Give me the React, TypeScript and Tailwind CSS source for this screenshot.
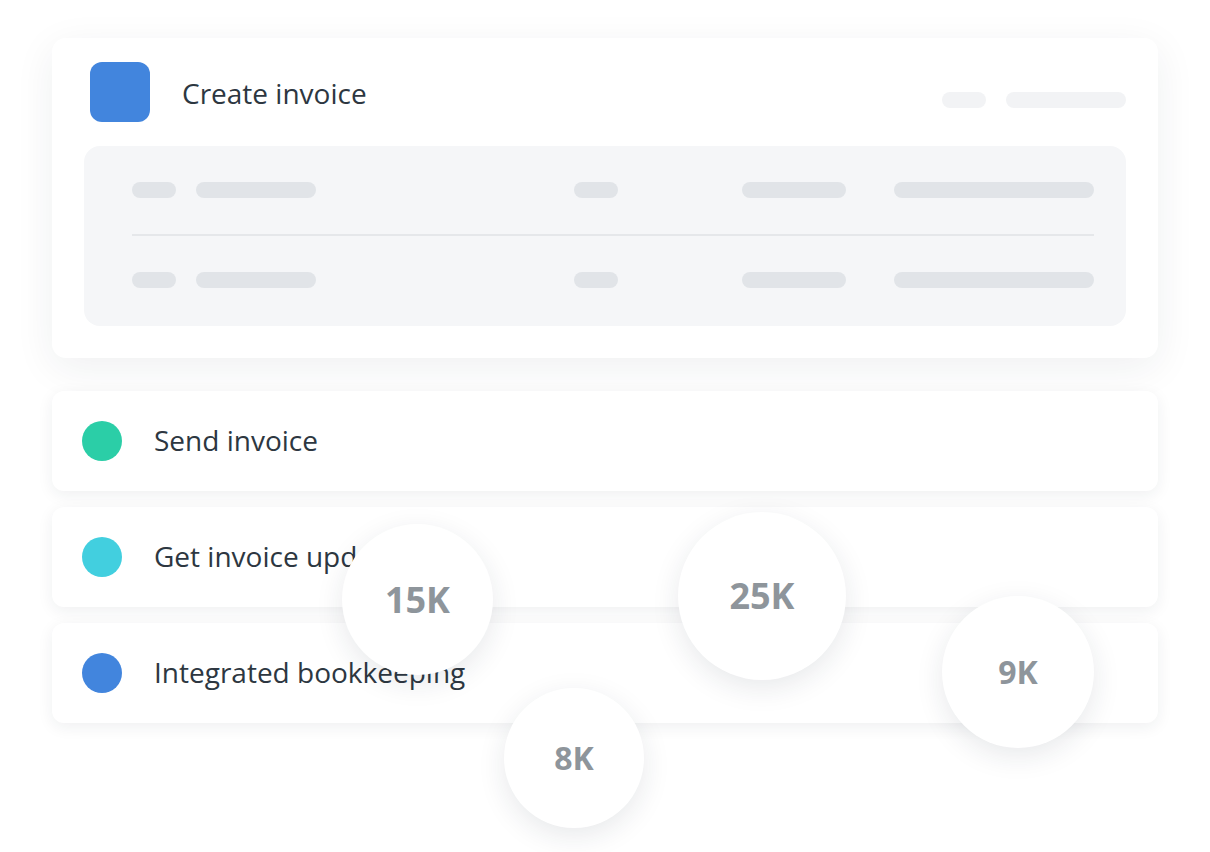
import React from 'react';

const Pill: React.FC<{ w: string; className?: string }> = ({ w, className = '' }) => (
    <div className={`h-4 shrink-0 rounded-full bg-[#e1e4e8] ${w} ${className}`} />
);

const SkeletonRow: React.FC = () => (
    <div className="flex items-center">
        <Pill w="w-[44px]" />
        <Pill w="w-[120px]" className="ml-5" />
        <Pill w="w-[44px]" className="ml-[258px]" />
        <Pill w="w-[104px]" className="ml-[124px]" />
        <Pill w="w-[200px]" className="ml-12" />
    </div>
);

const steps = [
    { label: 'Send invoice', dot: 'bg-[#2bcea7]' },
    { label: 'Get invoice updates', dot: 'bg-[#42cfdf]' },
    { label: 'Integrated bookkeeping', dot: 'bg-[#4285dd]' },
];

const bubbles = [
    { label: '15K', pos: 'left-[342px] top-[524px] size-[151px]', text: 'text-[36px]' },
    { label: '25K', pos: 'left-[678px] top-[512px] size-[168px]', text: 'text-[36px]' },
    { label: '9K', pos: 'left-[942px] top-[596px] size-[152px]', text: 'text-[32px]' },
    { label: '8K', pos: 'left-[504px] top-[688px] size-[140px]', text: 'text-[32px]' },
];

export default function App() {
    return (
        <div className="relative h-[852px] w-full bg-white overflow-hidden font-['Open_Sans',sans-serif] text-[#2d3741]">
            <div className="px-[52px] pt-[38px]">
                <section className="bg-white rounded-[14px] px-8 pt-6 pb-8 shadow-[0_10px_40px_rgba(30,40,60,0.07)]">
                    <header className="flex items-start">
                        <div className="ml-[6px] size-[60px] rounded-[12px] bg-[#4285dd]" />
                        <h1 className="ml-8 h-[60px] pt-[2px] flex items-center text-[28px] leading-none">Create invoice</h1>
                        <div className="ml-auto mt-[30px] flex gap-5">
                            <div className="h-4 w-[44px] rounded-full bg-[#f2f3f5]" />
                            <div className="h-4 w-[120px] rounded-full bg-[#f2f3f5]" />
                        </div>
                    </header>
                    <div className="mt-6 h-[180px] rounded-[16px] bg-[#f5f6f8] pl-12 pr-8 pt-9">
                        <SkeletonRow />
                        <div className="mt-9 h-[2px] bg-[#e5e7ea]" />
                        <div className="mt-9">
                            <SkeletonRow />
                        </div>
                    </div>
                </section>

                <div className="mt-[33px] flex flex-col gap-4">
                    {steps.map(s => (
                        <div
                            key={s.label}
                            className="h-[100px] bg-white rounded-[12px] px-[30px] flex items-center shadow-[0_4px_16px_rgba(30,40,60,0.07)]"
                        >
                            <span className={`size-10 rounded-full ${s.dot}`} />
                            <span className="ml-8 -mt-[3px] text-[28px] leading-none">{s.label}</span>
                        </div>
                    ))}
                </div>
            </div>

            {bubbles.map(b => (
                <div
                    key={b.label}
                    className={`absolute ${b.pos} rounded-full bg-white flex items-center justify-center shadow-[0_8px_28px_rgba(30,40,60,0.1)]`}
                >
                    <span className={`${b.text} font-bold text-[#8e959b] leading-none`}>{b.label}</span>
                </div>
            ))}
        </div>
    );
}
